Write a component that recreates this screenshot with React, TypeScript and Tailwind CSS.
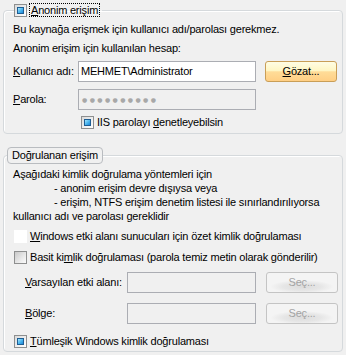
import React from 'react';

type BoxKind = 'checked' | 'blank' | 'gray';

function Box({ kind }: { kind: BoxKind }) {
  if (kind === 'blank') {
    return <span className="block h-[13px] w-[13px] shrink-0 bg-white" />;
  }
  if (kind === 'gray') {
    return (
      <span className="block h-[13px] w-[13px] shrink-0 border border-[#8e8f8f] bg-[linear-gradient(135deg,#c9c9c9_0%,#eeeeee_70%,#fafafa_100%)]" />
    );
  }
  return (
    <span className="flex h-[13px] w-[13px] shrink-0 items-center justify-center border border-[#8e8f8f] bg-[linear-gradient(135deg,#dadada,#ffffff)]">
      <span className="block h-[7px] w-[7px] border border-[#1e5d93] bg-[linear-gradient(135deg,#a6e6fd_0%,#48b4ee_55%,#1f86d6_100%)]" />
    </span>
  );
}

function SecButton() {
  return (
    <div className="ml-[10px] flex h-[21px] w-[72px] items-center justify-center rounded-[3px] border border-[#c4c4c4] bg-[radial-gradient(ellipse_45%_35%_at_50%_72%,#dcdcdc_0%,#e6e6e6_60%,#f4f4f4_100%)] text-[#a3a3a3]">
      Seç...
    </div>
  );
}

export default function App() {
  return (
    <div className="h-[355px] w-[346px] overflow-hidden bg-[#f0f0f0] pt-[3px] font-['Liberation_Sans',Arial,sans-serif] text-[11px] leading-[13px] tracking-[-0.2px] text-black">
      {/* Anonim erişim */}
      <fieldset className="mx-[3px] rounded-[4px] border border-[#d5d9dc] px-[2px] pb-[4px] shadow-[inset_1px_1px_0_#ffffff]">
        <legend className="ml-[8px] pr-[2px]">
          <span className="flex items-center gap-[2px]">
            <Box kind="checked" />
            <span className="border border-dotted border-black px-[1px] leading-[12px]">
              <u>A</u>nonim erişim
            </span>
          </span>
        </legend>
        <div className="pl-[7px] pt-[6px]">
          <p>Bu kaynağa erişmek için kullanıcı adı/parolası gerekmez.</p>
          <p className="mt-[6px]">Anonim erişim için kullanılan hesap:</p>
          <div className="mt-[6px] flex items-center">
            <span className="w-[65px]">
              <u>K</u>ullanıcı adı:
            </span>
            <div className="flex h-[21px] w-[178px] items-center border border-[#abadb3] bg-white pl-[2px]">
              MEHMET\Administrator
            </div>
            <div className="ml-[9px] flex h-[21px] w-[72px] items-center justify-center rounded-[3px] border border-[#c99e57] bg-[linear-gradient(#fffde4_0%,#fff6c4_45%,#ffdc98_52%,#ffcf84_100%)]">
              <span>
                <u>G</u>özat...
              </span>
            </div>
          </div>
          <div className="mt-[7px] flex items-center">
            <span className="w-[65px]">
              <u>P</u>arola:
            </span>
            <div className="flex h-[21px] w-[178px] items-center border border-[#abadb3] pl-[3px] font-['DejaVu_Sans',sans-serif] text-[6px] tracking-[2.4px] text-[#a8a8a8]">
              ●●●●●●●●●●
            </div>
          </div>
          <div className="mt-[6px] flex items-center gap-[3px] pl-[68px]">
            <Box kind="checked" />
            <span>
              IIS parolayı <u>d</u>enetleyebilsin
            </span>
          </div>
        </div>
      </fieldset>

      {/* Doğrulanan erişim */}
      <fieldset className="mx-[3px] mt-[13px] rounded-[4px] border border-[#d5d9dc] px-[2px] pb-[3px] shadow-[inset_1px_1px_0_#ffffff]">
        <legend className="ml-[1px]">
          <span className="block rounded-[4px] border border-[#b9bcc0] bg-[#f0f0f0] px-[4px] py-[1px] leading-[13px]">
            Doğrulanan erişim
          </span>
        </legend>
        <div className="pl-[7px] pt-[3px]">
          <div className="leading-[14px]">
            <p>Aşağıdaki kimlik doğrulama yöntemleri için</p>
            <p className="pl-[41px]">- anonim erişim devre dışıysa veya</p>
            <p className="pl-[41px]">- erişim, NTFS erişim denetim listesi ile sınırlandırılıyorsa</p>
            <p>kullanıcı adı ve parolası gereklidir</p>
          </div>
          <div className="mt-[7px] flex items-center gap-[3px] pl-[1px]">
            <Box kind="blank" />
            <span>
              <u>W</u>indows etki alanı sunucuları için özet kimlik doğrulaması
            </span>
          </div>
          <div className="mt-[8px] flex items-center gap-[3px] pl-[1px]">
            <Box kind="gray" />
            <span>
              Basit ki<u>m</u>lik doğrulaması (parola temiz metin olarak gönderilir)
            </span>
          </div>
          <div className="mt-[8px] flex items-center pl-[12px]">
            <span className="w-[102px]">
              <u>V</u>arsayılan etki alanı:
            </span>
            <div className="h-[21px] w-[129px] border border-[#abadb3]" />
            <SecButton />
          </div>
          <div className="mt-[10px] flex items-center pl-[12px]">
            <span className="w-[102px]">
              <u>B</u>ölge:
            </span>
            <div className="h-[21px] w-[129px] border border-[#abadb3]" />
            <SecButton />
          </div>
          <div className="mt-[11px] flex items-center gap-[3px] pl-[1px]">
            <Box kind="checked" />
            <span>
              <u>T</u>ümleşik Windows kimlik doğrulaması
            </span>
          </div>
        </div>
      </fieldset>
    </div>
  );
}
